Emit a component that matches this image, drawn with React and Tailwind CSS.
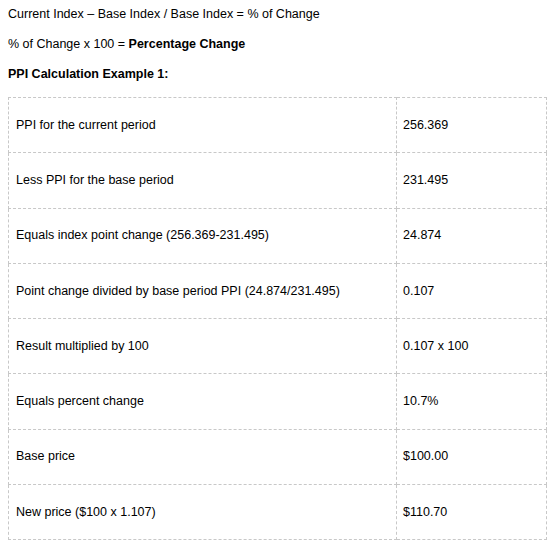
import React from 'react';

const rows = [
  ['PPI for the current period', '256.369'],
  ['Less PPI for the base period', '231.495'],
  ['Equals index point change (256.369-231.495)', '24.874'],
  ['Point change divided by base period PPI (24.874/231.495)', '0.107'],
  ['Result multiplied by 100', '0.107 x 100'],
  ['Equals percent change', '10.7%'],
  ['Base price', '$100.00'],
  ['New price ($100 x 1.107)', '$110.70'],
];

export default function App() {
  return (
    <div className="bg-white text-black text-[12.5px] px-2 pt-[6px]" style={{ fontFamily: '"Liberation Sans", Arial, sans-serif' }}>
      <p className="h-[30px] leading-[16px]">Current Index – Base Index / Base Index = % of Change</p>
      <p className="h-[30px] leading-[16px]">
        % of Change x 100 = <strong>Percentage Change</strong>
      </p>
      <p className="h-[31px] leading-[16px] font-bold">PPI Calculation Example 1:</p>
      <table className="w-[539px] border-collapse">
        <tbody>
          {rows.map(([label, value], idx) => (
            <tr key={idx} className="h-[55.25px]">
              <td className="w-[388px] border border-dashed border-[#c8c8c8] px-[7px] align-middle">{label}</td>
              <td className="border border-dashed border-[#c8c8c8] px-[6px] align-middle">{value}</td>
            </tr>
          ))}
        </tbody>
      </table>
    </div>
  );
}
